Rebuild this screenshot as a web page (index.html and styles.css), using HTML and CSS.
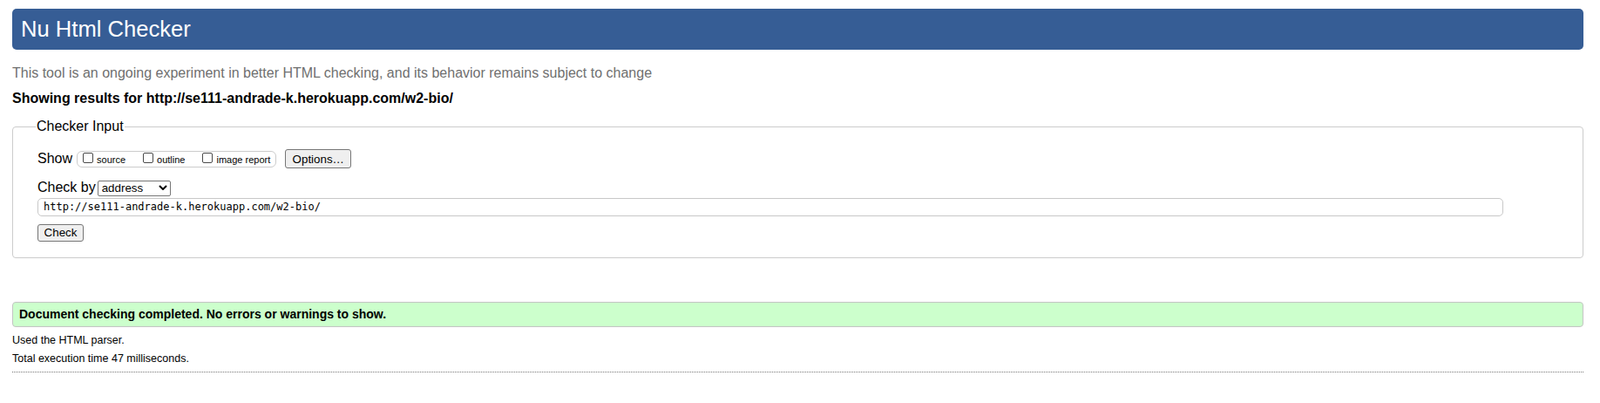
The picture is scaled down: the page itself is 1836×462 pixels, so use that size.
FILE: index.html
```html
<!DOCTYPE html>
<html lang="en">
<head>
<meta charset="utf-8">
<title>Nu Html Checker</title>
<link rel="stylesheet" href="styles.css">
</head>
<body>
<h1 class="title">Nu Html Checker</h1>
<p class="intro">This tool is an ongoing experiment in better HTML checking, and its behavior remains subject to change</p>
<p class="showing">Showing results for http://se111-andrade-k.herokuapp.com/w2-bio/</p>
<form class="checker">
  <fieldset class="checker-input">
    <legend class="checker-legend">Checker Input</legend>
    <div class="row row-show">
      <span class="row-label">Show</span>
      <div class="show-group">
        <label class="opt"><input type="checkbox" class="cb">source</label><label class="opt"><input type="checkbox" class="cb">outline</label><label class="opt"><input type="checkbox" class="cb">image report</label>
      </div>
      <button type="button" class="btn btn-options">Options…</button>
    </div>
    <div class="row row-by">
      <span class="row-label">Check by</span>
      <span class="select-wrap">
        <select class="select"><option>address</option></select>
        <svg class="chev" width="10" height="6" viewBox="0 0 10 6" aria-hidden="true"><path d="M1 1 L5 5 L9 1" fill="none" stroke="#000" stroke-width="2"/></svg>
      </span>
    </div>
    <input class="url" type="text" value="http://se111-andrade-k.herokuapp.com/w2-bio/">
    <button type="button" class="btn btn-check">Check</button>
  </fieldset>
</form>
<p class="status">Document checking completed. No errors or warnings to show.</p>
<p class="meta">Used the HTML parser.</p>
<p class="meta meta-time">Total execution time 47 milliseconds.</p>
<hr class="rule">
</body>
</html>
```
FILE: styles.css
```css
html, body {
  margin: 0;
}
body {
  padding: 10px 19px 0 14px;
  font-family: "Liberation Sans", Arial, sans-serif;
  font-size: 16px;
  color: #000;
  background: #fff;
}
.title {
  margin: 0;
  height: 47px;
  line-height: 47px;
  padding: 0 10px;
  background: #365d95;
  color: #fff;
  font-size: 25.6px;
  font-weight: normal;
  border-radius: 5px;
}
.intro {
  margin: 18px 0 0;
  font-size: 16px;
  line-height: 18.4px;
  color: #6f6f6f;
}
.showing {
  margin: 11px 0 0;
  font-size: 16px;
  line-height: 18.4px;
  font-weight: bold;
}
.checker {
  margin: 13px 0 0;
}
.checker-input {
  margin: 0;
  min-width: 0;
  border: 1px solid #ccc;
  border-radius: 4px;
  padding: 17px 28px 18px;
}
.checker-legend {
  padding: 0 1px;
  margin-left: -2px;
  font-size: 16px;
  line-height: 18.4px;
}
.row {
  display: flex;
  align-items: center;
}
.row-show {
  height: 22px;
}
.row-label {
  font-size: 16px;
  line-height: 18.4px;
}
.show-group {
  margin-left: 5px;
  height: 19px;
  box-sizing: border-box;
  border: 1px solid #ccc;
  border-radius: 6px;
  padding: 1px 6px 0;
  font-size: 11px;
  line-height: 16px;
  white-space: nowrap;
}
.opt {
  margin-right: 20px;
}
.opt:last-child {
  margin-right: 0;
}
.cb {
  appearance: none;
  -webkit-appearance: none;
  box-sizing: border-box;
  width: 12px;
  height: 12px;
  margin: 0 4px 0 0;
  border: 1px solid #4a4a4a;
  border-radius: 2px;
  background: #fff;
  vertical-align: baseline;
}
.btn {
  font-family: "Liberation Sans", Arial, sans-serif;
  font-size: 13.33px;
  color: #000;
  background: #efefef;
  border: 1px solid #767676;
  border-radius: 3px;
  padding: 0;
  box-sizing: border-box;
}
.btn-options {
  margin-left: 10px;
  width: 76px;
  height: 22px;
}
.row-by {
  margin-top: 13px;
  align-items: baseline;
}
.select-wrap {
  position: relative;
  display: inline-flex;
  margin-left: 2px;
}
.select {
  appearance: none;
  -webkit-appearance: none;
  box-sizing: border-box;
  width: 84px;
  height: 18px;
  margin: 0;
  padding: 0 0 0 4px;
  border: 1px solid #767676;
  border-radius: 2px;
  background: #fff;
  color: #000;
  font-family: "Liberation Sans", Arial, sans-serif;
  font-size: 13.33px;
}
.chev {
  position: absolute;
  right: 4px;
  top: 5px;
}
.url {
  display: block;
  margin: 2px 0 0;
  width: 1682px;
  height: 21px;
  box-sizing: border-box;
  border: 1px solid #c8c8c8;
  border-radius: 5px;
  padding: 0 6px;
  font-family: "DejaVu Sans Mono", monospace;
  font-size: 12px;
  color: #000;
  background: #fff;
}
.btn-check {
  display: block;
  margin-top: 9px;
  width: 53px;
  height: 20px;
}
.status {
  margin: 50px 0 0;
  height: 29px;
  box-sizing: border-box;
  border: 1px solid #c4c4c4;
  border-radius: 4px;
  background: #ccffcc;
  padding: 0 7px;
  line-height: 27px;
  font-size: 14px;
  font-weight: bold;
}
.meta {
  margin: 8.5px 0 0;
  font-size: 12.5px;
  line-height: 14.4px;
}
.meta-time {
  margin-top: 6.5px;
}
.rule {
  margin: 7px 0 0;
  height: 0;
  border: 0;
  border-top: 1px dotted #777;
}
```
